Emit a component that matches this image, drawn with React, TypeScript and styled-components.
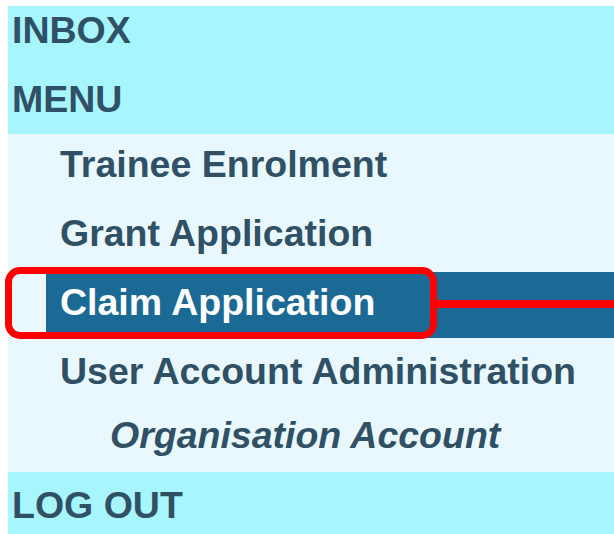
import React from "react";
import styled, { createGlobalStyle } from "styled-components";

const Global = createGlobalStyle`
  html, body {
    margin: 0;
    padding: 0;
    background: #ffffff;
  }
  body {
    font-family: "Liberation Sans", Arial, sans-serif;
    overflow: hidden;
  }
`;

const Page = styled.div`
  padding: 6px 0 0 8px;
  width: 614px;
  box-sizing: border-box;
`;

const Nav = styled.nav`
  position: relative;
  display: flex;
  flex-direction: column;
`;

const HeadGroup = styled.div`
  display: flex;
  flex-direction: column;
  background: #a8f6fd;
`;

const SubGroup = styled.ul`
  list-style: none;
  margin: 0;
  padding: 0;
  display: flex;
  flex-direction: column;
  background: #e8f8fe;
`;

const HeadLink = styled.a<{ $h: number; $pt: number }>`
  display: block;
  box-sizing: border-box;
  height: ${(p) => p.$h}px;
  padding: ${(p) => p.$pt}px 0 0 4px;
  font: 700 37.5px/37px "Liberation Sans", Arial, sans-serif;
  color: #2f5065;
  text-decoration: none;
  white-space: nowrap;
`;

const Item = styled.li<{ $active?: boolean }>`
  box-sizing: border-box;
  height: ${(p) => (p.$active ? 66 : 69)}px;
  margin: 0 0 ${(p) => (p.$active ? 3 : 0)}px ${(p) => (p.$active ? 38 : 0)}px;
  padding: 12px 0 0 ${(p) => (p.$active ? 14 : 52)}px;
  background: ${(p) => (p.$active ? "#1b6a96" : "transparent")};
  font: 700 37.5px/37px "Liberation Sans", Arial, sans-serif;
  color: ${(p) => (p.$active ? "#ffffff" : "#2f5065")};
  white-space: nowrap;
`;

const SubItem = styled.li`
  box-sizing: border-box;
  height: 62px;
  padding: 7px 0 0 102px;
  font: italic 700 37.5px/37px "Liberation Sans", Arial, sans-serif;
  color: #2f5065;
  white-space: nowrap;
`;

/* red highlight frame around the selected entry, with its leader line */
const Callout = styled.div`
  position: absolute;
  left: -3px;
  top: 261px;
  width: 432px;
  height: 72px;
  box-sizing: border-box;
  border: 7px solid #ff0000;
  border-radius: 15px;
  pointer-events: none;
`;

const Leader = styled.div`
  position: absolute;
  left: 429px;
  right: 0;
  top: 294px;
  height: 8px;
  background: #ff0000;
  pointer-events: none;
`;

export default function App() {
  return (
    <Page>
      <Global />
      <Nav>
        <HeadGroup>
          <HeadLink $h={64} $pt={6}>INBOX</HeadLink>
          <HeadLink $h={64} $pt={11}>MENU</HeadLink>
        </HeadGroup>
        <SubGroup>
          <Item>Trainee Enrolment</Item>
          <Item>Grant Application</Item>
          <Item $active>Claim Application</Item>
          <Item>User Account Administration</Item>
          <SubItem>Organisation Account</SubItem>
        </SubGroup>
        <HeadGroup>
          <HeadLink $h={62} $pt={15}>LOG OUT</HeadLink>
        </HeadGroup>
        <Callout />
        <Leader />
      </Nav>
    </Page>
  );
}
